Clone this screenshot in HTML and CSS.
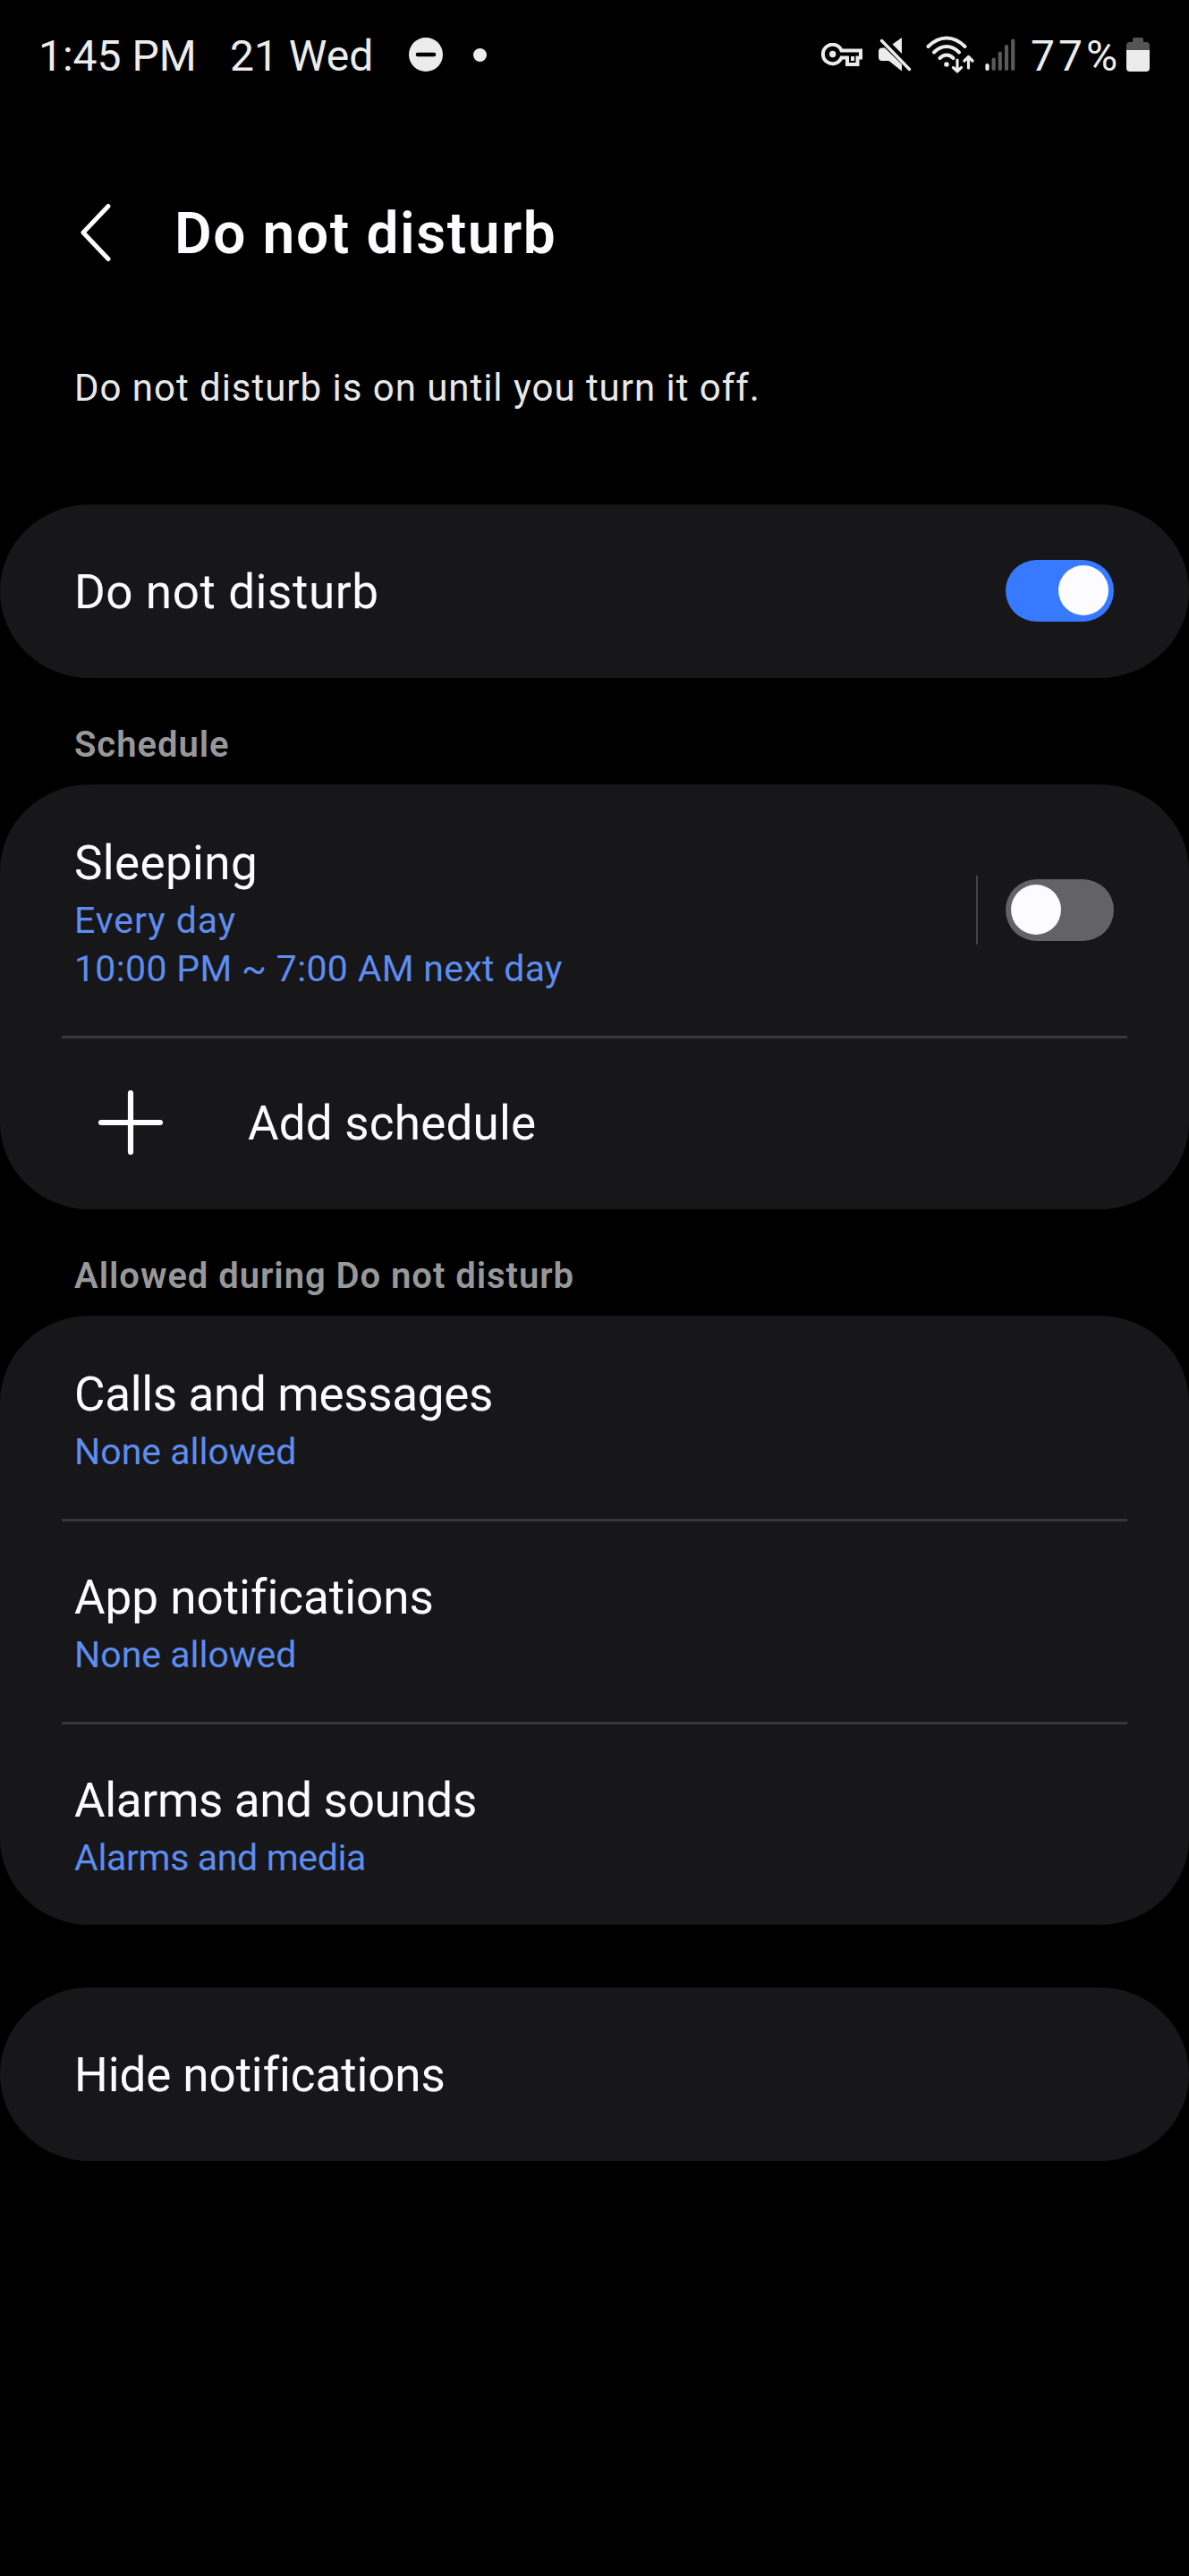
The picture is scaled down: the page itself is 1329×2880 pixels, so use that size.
FILE: index.html
```html
<!DOCTYPE html>
<html lang="en">
<head>
    <meta charset="UTF-8">
    <meta name="viewport" content="width=device-width, initial-scale=1.0">
    <title>Do not disturb</title>
    <link rel="stylesheet" href="styles.css">
</head>
<body>
    <div class="status-bar">
        <span class="time">1:45 PM</span>
        <span class="date">21 Wed</span>
        <svg class="dnd-icon" width="38" height="38" viewBox="0 0 38 38">
            <circle cx="19" cy="19" r="19" fill="#ececec"/>
            <path d="M10 19H28" stroke="#000" stroke-width="4.6" stroke-linecap="round"/>
        </svg>
        <span class="dot"></span>
        <div class="status-icons">
            <svg class="key-icon" width="46" height="26" viewBox="0 0 46 26">
                <path d="M22.5 8.5H44V16.5H40.5V24H29V16.5H22.5A10.700 10.700 0 1 1 22.5 8.5Z" fill="none" stroke="#ececec" stroke-width="4"/>
                <path d="M35 15V20" stroke="#ececec" stroke-width="4"/>
                <circle cx="12.7" cy="12.5" r="3.7" fill="#ececec"/>
            </svg>
            <svg class="mute-icon" width="37" height="38" viewBox="0 0 37 38">
                <path d="M26 0V18L15.5 7.5Z" fill="#ececec"/>
                <path d="M4 11.5H7L26 30V37.5L11.5 26H4Q0 26 0 22V15.5Q0 11.5 4 11.5Z" fill="#ececec"/>
                <path d="M3.5 3.5L34.5 35.5" stroke="#ececec" stroke-width="3.4" stroke-linecap="round"/>
            </svg>
            <svg class="wifi-icon" width="54" height="42" viewBox="0 0 54 42">
                <g fill="none" stroke="#ececec" stroke-width="4" stroke-linecap="round" stroke-linejoin="round">
                    <path d="M2.5 12Q12 2.5 23 2.5T43.5 12"/>
                    <path d="M9 18.5Q15.5 12 23 12T37 18.5"/>
                    <path d="M15.5 25Q19 21.5 23 21.5T30.5 25"/>
                    <path d="M35 27V39.5M30.5 35.5L35 39.8L39.5 35.5" stroke-width="3.2"/>
                    <path d="M47.5 36V23.5M43 28L47.5 23.5L52 28" stroke-width="3.2"/>
                </g>
                <circle cx="23" cy="32" r="2.8" fill="#ececec"/>
            </svg>
            <svg class="signal-icon" width="34" height="37" viewBox="0 0 34 37">
                <g stroke-width="4.2" stroke-linecap="round" stroke="#5a5a5a">
                    <path d="M2.5 30V34" stroke="#ececec"/>
                    <path d="M9.7 23.5V34"/>
                    <path d="M16.8 16.5V34"/>
                    <path d="M24 9V34"/>
                    <path d="M31.2 2.5V34"/>
                </g>
            </svg>
            <span class="percent">77%</span>
            <svg class="battery-icon" width="26" height="38" viewBox="0 0 26 38">
                <path d="M7 5V2Q7 0 9 0H17Q19 0 19 2V5H22Q26 5 26 9V14H0V9Q0 5 4 5Z" fill="#555"/>
                <path d="M0 14H26V34Q26 38 22 38H4Q0 38 0 34Z" fill="#ececec"/>
            </svg>
        </div>
    </div>

    <header class="title-bar">
        <svg class="back-icon" width="36" height="66" viewBox="0 0 36 66">
            <path d="M32 3.5L4 33L32 62.5" fill="none" stroke="#fff" stroke-width="5" stroke-linecap="round" stroke-linejoin="round"/>
        </svg>
        <h1>Do not disturb</h1>
    </header>

    <p class="description">Do not disturb is on until you turn it off.</p>

    <section class="card">
        <div class="row">
            <div class="text">
                <div class="title t-dnd">Do not disturb</div>
            </div>
            <div class="toggle on"><span class="knob"></span></div>
        </div>
    </section>

    <h2 class="h-schedule">Schedule</h2>
    <section class="card">
        <div class="row tall">
            <div class="text">
                <div class="title t-sleeping">Sleeping</div>
                <div class="summary s-every">Every day</div>
                <div class="summary s-time">10:00 PM ~ 7:00 AM next day</div>
            </div>
            <span class="separator"></span>
            <div class="toggle"><span class="knob"></span></div>
        </div>
        <div class="row">
            <svg class="plus-icon" width="72" height="72" viewBox="0 0 72 72">
                <path d="M36 3V69M3 36H69" stroke="#fcfcff" stroke-width="6.2" stroke-linecap="round"/>
            </svg>
            <div class="text">
                <div class="title t-add">Add schedule</div>
            </div>
        </div>
    </section>

    <h2 class="h-allowed">Allowed during Do not disturb</h2>
    <section class="card">
        <div class="row medium">
            <div class="text">
                <div class="title t-calls">Calls and messages</div>
                <div class="summary">None allowed</div>
            </div>
        </div>
        <div class="row medium">
            <div class="text">
                <div class="title">App notifications</div>
                <div class="summary">None allowed</div>
            </div>
        </div>
        <div class="row medium">
            <div class="text">
                <div class="title t-alarms">Alarms and sounds</div>
                <div class="summary s-media">Alarms and media</div>
            </div>
        </div>
    </section>

    <section class="card last">
        <div class="row">
            <div class="text">
                <div class="title t-hide">Hide notifications</div>
            </div>
        </div>
    </section>
</body>
</html>
```

FILE: styles.css
```css
* {
    box-sizing: border-box;
}
body {
    margin: 0;
    min-height: 2880px;
    background-color: #000;
    color: #fcfcff;
    font-family: Roboto, "Liberation Sans", sans-serif;
    font-variant-ligatures: none;
    white-space: nowrap;
}
svg {
    display: block;
    flex: none;
}
.status-bar {
    display: flex;
    align-items: center;
    height: 122px;
    padding: 0 44px 0 43px;
    font-size: 48px;
    line-height: 60px;
    color: #ececec;
}
.time, .date, .percent {
    padding-top: 4px;
}
.time {
    width: 214px;
}
.date {
    width: 200px;
}
.dot {
    width: 15px;
    height: 15px;
    margin-left: 34px;
    border-radius: 50%;
    background-color: #ececec;
}
.status-icons {
    display: flex;
    align-items: center;
    margin-left: auto;
}
.mute-icon {
    margin-left: 18px;
}
.wifi-icon {
    margin-left: 16px;
}
.signal-icon {
    margin-left: 12px;
}
.percent {
    width: 107px;
    margin-left: 17px;
    letter-spacing: 4px;
}
.title-bar {
    display: flex;
    align-items: center;
    height: 276px;
    padding: 0 89px;
}
h1 {
    margin: 4px 0 0 70px;
    font-size: 64px;
    line-height: 80px;
    font-weight: 600;
    letter-spacing: 1.6px;
}
.description {
    height: 166px;
    margin: 0;
    padding: 6px 83px;
    font-size: 42px;
    line-height: 60px;
    letter-spacing: 0.97px;
    color: #e8e8e8;
}
.card {
    padding: 0 69px;
    border-radius: 100px / 97px;
    background-color: #17171a;
}
.row {
    display: flex;
    align-items: center;
    height: 194px;
    padding: 0 15px 0 14px;
}
.row + .row {
    border-top: 3px solid #38383a;
}
.tall {
    height: 281px;
}
.medium {
    height: 227px;
}
.text {
    flex: 1;
    padding-top: 3px;
}
.row + .row .text {
    padding-top: 0;
}
.title {
    font-size: 53px;
    line-height: 73px;
}
.summary {
    font-size: 41px;
    line-height: 54px;
    color: #5e8df0;
}
.t-dnd {
    letter-spacing: 0.57px;
}
.t-sleeping {
    letter-spacing: 0.35px;
}
.t-add {
    letter-spacing: 0.2px;
}
.t-calls, .t-alarms, .s-media {
    letter-spacing: -0.34px;
}
.t-hide {
    letter-spacing: -0.1px;
}
.s-every {
    letter-spacing: 0.95px;
}
.s-time {
    letter-spacing: 0.33px;
}
h2 {
    height: 119px;
    margin: 0;
    padding: 47px 83px 0;
    font-size: 40px;
    line-height: 56px;
    font-weight: 600;
    letter-spacing: 0.95px;
    color: #98989a;
}
.toggle {
    display: flex;
    width: 121px;
    height: 69px;
    padding: 6px;
    border-radius: 35px;
    background-color: #636266;
}
.toggle.on {
    justify-content: flex-end;
    margin-bottom: 2px;
    background-color: #387aff;
}
.knob {
    width: 56px;
    height: 56px;
    border-radius: 50%;
    background-color: #fcfcff;
}
.separator {
    width: 2px;
    height: 77px;
    margin-right: 31px;
    background-color: #444446;
}
.plus-icon {
    margin: 0 95px 3px 27px;
}
.last {
    margin-top: 70px;
}
```
